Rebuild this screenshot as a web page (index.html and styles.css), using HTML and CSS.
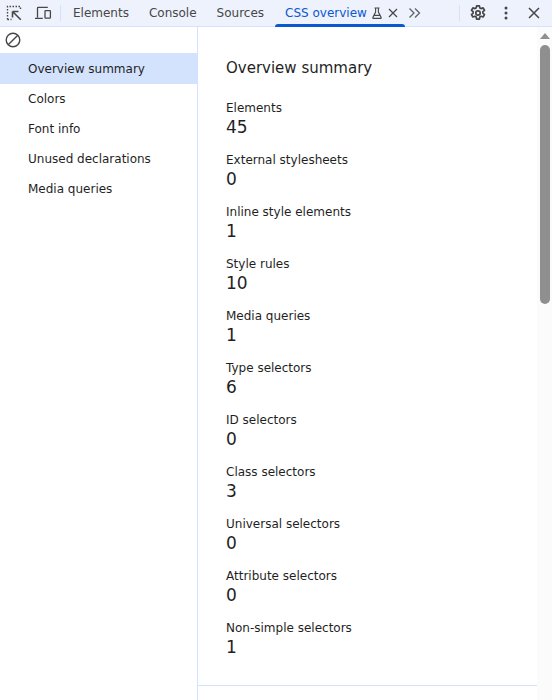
FILE: index.html
```html
<!DOCTYPE html>
<html lang="en">
<head>
<meta charset="utf-8">
<title>CSS overview</title>
<link rel="stylesheet" href="styles.css">
</head>
<body>
<div class="devtools">
  <header class="toolbar">
    <button class="icon-btn first" aria-label="Inspect">
      <svg width="18" height="18" viewBox="0 0 18 18" fill="none" stroke="#474747" stroke-width="1.4">
        <path d="M1.500 15.500V2.500H14.500V6.500M1.500 15.500H5.500" stroke-dasharray="1.500 1.500"/>
        <path d="M6.500 7.500h6M6.500 7.500v6M6.800 7.800l8 8" stroke-width="1.600"/>
      </svg>
    </button>
    <button class="icon-btn" aria-label="Device">
      <svg width="18" height="18" viewBox="0 0 18 18" fill="none" stroke="#474747" stroke-width="1.3">
        <path d="M3.500 13.500V4.200a.8.8 0 0 1 .8-.8h9.500M1 14.300h7.800"/>
        <rect x="11" y="6.600" width="5.400" height="7.600" rx=".6"/>
      </svg>
    </button>
    <span class="sep"></span>
    <nav class="tabs">
      <span class="tab">Elements</span>
      <span class="tab">Console</span>
      <span class="tab">Sources</span>
      <span class="tab active">CSS overview
        <svg class="flask" width="14" height="14" viewBox="0 0 14 14" fill="none" stroke="#474747" stroke-width="1.1"><path d="M4.500 2h5M5.600 2v4L2.800 11.600a.5.5 0 0 0 .4.8h7.600a.5.5 0 0 0 .4-.8L8.400 6V2M4.300 9.400h5.400"/></svg>
        <svg class="close-small" width="12" height="12" viewBox="0 0 12 12" fill="none" stroke="#474747" stroke-width="1.2"><path d="M2 2l8 8M10 2l-8 8"/></svg>
      </span>
    </nav>
    <button class="icon-btn more" aria-label="More tabs">
      <svg width="14" height="14" viewBox="0 0 14 14" fill="none" stroke="#5f6368" stroke-width="1.3"><path d="M1.500 2.500L6 7 1.500 11.500M7 2.500L11.500 7 7 11.500"/></svg>
    </button>
    <span class="sep right"></span>
    <button class="icon-btn" aria-label="Settings">
      <svg width="18" height="18" viewBox="0 0 18 18" fill="none" stroke="#474747" stroke-width="1.700"><path d="M7.600 1.800h2.800l.4 2.100 1.300.7 2-.7 1.400 2.400-1.600 1.400v1.500l1.600 1.400-1.400 2.400-2-.7-1.300.7-.4 2.100H7.600l-.4-2.100-1.300-.7-2 .7-1.400-2.400 1.600-1.400V7.700L2.500 6.300l1.400-2.400 2 .7 1.300-.7z" stroke-linejoin="round"/><circle cx="9" cy="9" r="2.200"/></svg>
    </button>
    <button class="icon-btn" aria-label="Customize">
      <svg width="18" height="18" viewBox="0 0 18 18" fill="#474747"><circle cx="9" cy="4" r="1.500"/><circle cx="9" cy="9" r="1.500"/><circle cx="9" cy="14" r="1.500"/></svg>
    </button>
    <button class="icon-btn" aria-label="Close">
      <svg width="14" height="14" viewBox="0 0 14 14" fill="none" stroke="#474747" stroke-width="1.500"><path d="M2 2l10 10M12 2L2 12"/></svg>
    </button>
  </header>
  <div class="main">
    <aside class="sidebar">
      <div class="clear-row">
        <svg width="16" height="16" viewBox="0 0 16 16" fill="none" stroke="#474747" stroke-width="1.400"><circle cx="8" cy="8" r="6.800"/><path d="M3.200 12.800l9.600-9.600"/></svg>
      </div>
      <ul class="nav">
        <li class="nav-item selected">Overview summary</li>
        <li class="nav-item">Colors</li>
        <li class="nav-item">Font info</li>
        <li class="nav-item">Unused declarations</li>
        <li class="nav-item">Media queries</li>
      </ul>
    </aside>
    <section class="content">
      <div class="summary">
        <h1 class="title">Overview summary</h1>
        <dl class="stats">
          <div class="stat"><dt>Elements</dt><dd>45</dd></div>
          <div class="stat"><dt>External stylesheets</dt><dd>0</dd></div>
          <div class="stat"><dt>Inline style elements</dt><dd>1</dd></div>
          <div class="stat"><dt>Style rules</dt><dd>10</dd></div>
          <div class="stat"><dt>Media queries</dt><dd>1</dd></div>
          <div class="stat"><dt>Type selectors</dt><dd>6</dd></div>
          <div class="stat"><dt>ID selectors</dt><dd>0</dd></div>
          <div class="stat"><dt>Class selectors</dt><dd>3</dd></div>
          <div class="stat"><dt>Universal selectors</dt><dd>0</dd></div>
          <div class="stat"><dt>Attribute selectors</dt><dd>0</dd></div>
          <div class="stat"><dt>Non-simple selectors</dt><dd>1</dd></div>
        </dl>
      </div>
      <div class="scrollbar">
        <svg class="arrow" width="10" height="6" viewBox="0 0 10 6" fill="#8f8f8f"><path d="M5 0l5 6H0z"/></svg>
        <span class="thumb"></span>
      </div>
    </section>
  </div>
</div>
</body>
</html>
```
FILE: styles.css
```css
* { box-sizing: border-box; }
html, body { margin: 0; height: 100%; }
body {
  font-family: "DejaVu Sans", sans-serif;
  font-size: 12px;
  color: #1f1f1f;
  background: #fff;
  overflow: hidden;
}
.devtools { display: flex; flex-direction: column; height: 700px; width: 552px; }
.toolbar {
  display: flex;
  align-items: center;
  height: 27px;
  flex: none;
  padding-right: 4px;
  background: #edf2fc;
  border-bottom: 1px solid #d3e3fd;
}
.icon-btn {
  display: flex;
  align-items: center;
  justify-content: center;
  width: 28px;
  height: 26px;
  padding: 0;
  border: 0;
  background: none;
}
.icon-btn.first { margin-left: 1px; }
.sep { width: 1px; height: 16px; background: #d3e3fd; margin: 0 2px 0 3px; flex: none; }
.sep.right { margin: 0 4px 0 auto; }
.tabs { display: flex; height: 26px; }
.tab {
  display: flex;
  align-items: center;
  padding: 0 10px;
  color: #474747;
  white-space: nowrap;
}
.tab.active {
  position: relative;
  color: #0b57d0;
  margin-left: 1px;
  padding-right: 4px;
  width: 130px;
}
.tab.active::after {
  content: "";
  position: absolute;
  left: 0;
  right: 0;
  bottom: -1px;
  height: 3px;
  border-radius: 3px 3px 0 0;
  background: #0b57d0;
}
.flask { margin-left: 3px; flex: none; }
.close-small { margin-left: 3px; flex: none; }
.icon-btn.more { width: 20px; }
.main { display: flex; flex: 1; min-height: 0; }
.sidebar {
  width: 198px;
  flex: none;
  border-right: 1px solid #d3e3fd;
}
.clear-row { display: flex; align-items: center; height: 26px; padding-left: 5px; }
.nav { list-style: none; margin: 0; padding: 0; }
.nav-item {
  display: flex;
  align-items: center;
  height: 30px;
  padding-left: 28px;
}
.nav-item.selected { background: #d3e3fd; height: 31px; }
.content { display: flex; flex: 1; min-width: 0; }
.summary {
  flex: 1;
  height: 659px;
  padding: 32px 0 0 28px;
  border-bottom: 1px solid #d3e3fd;
}
.title {
  margin: 0 0 23px;
  font-size: 15px;
  font-weight: 400;
  line-height: 18px;
}
.stats { margin: 0; display: flex; flex-direction: column; gap: 12px; }
.stat { height: 40px; }
.stat dt { line-height: 16px; }
.stat dd { margin: 0; font-size: 17px; line-height: 22px; }
.scrollbar {
  position: relative;
  width: 15px;
  flex: none;
  background: #fbfbfb;
}
.arrow { position: absolute; left: 3px; top: 6px; }
.thumb {
  position: absolute;
  left: 3px;
  top: 18px;
  width: 10px;
  height: 259px;
  border-radius: 5px;
  background: #8f8f8f;
}
```
